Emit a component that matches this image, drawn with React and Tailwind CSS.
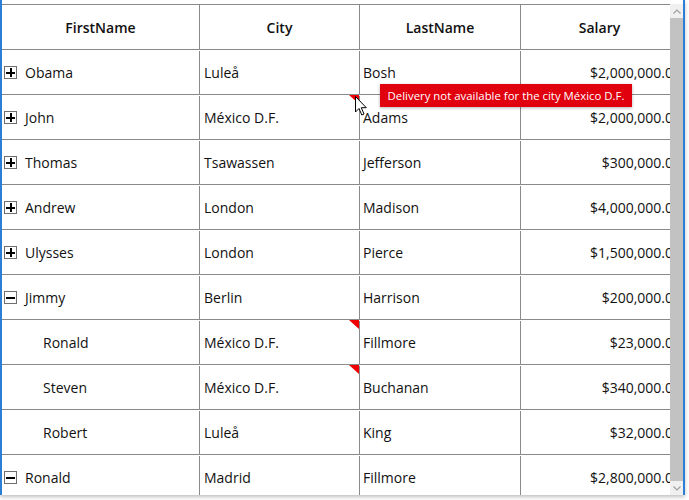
import React from "react";

const rows = [
  { first: "Obama", city: "Luleå", last: "Bosh", salary: "$2,000,000.00", kind: "plus" },
  { first: "John", city: "México D.F.", last: "Adams", salary: "$2,000,000.00", kind: "plus", flag: true },
  { first: "Thomas", city: "Tsawassen", last: "Jefferson", salary: "$300,000.00", kind: "plus" },
  { first: "Andrew", city: "London", last: "Madison", salary: "$4,000,000.00", kind: "plus" },
  { first: "Ulysses", city: "London", last: "Pierce", salary: "$1,500,000.00", kind: "plus" },
  { first: "Jimmy", city: "Berlin", last: "Harrison", salary: "$200,000.00", kind: "minus" },
  { first: "Ronald", city: "México D.F.", last: "Fillmore", salary: "$23,000.00", kind: "child", flag: true },
  { first: "Steven", city: "México D.F.", last: "Buchanan", salary: "$340,000.00", kind: "child", flag: true },
  { first: "Robert", city: "Luleå", last: "King", salary: "$32,000.00", kind: "child" },
  { first: "Ronald", city: "Madrid", last: "Fillmore", salary: "$2,800,000.00", kind: "minus" },
];

const Expander = ({ open }) => (
  <span className="relative w-[13px] h-[13px] border border-[#6f6f6f] shrink-0 bg-white">
    <span className="absolute left-[1px] right-[1px] top-[4.5px] h-[2px] bg-black" />
    {!open && <span className="absolute top-[1px] bottom-[1px] left-[4.5px] w-[2px] bg-black" />}
  </span>
);

const Cursor = () => (
  <svg width="13" height="20" viewBox="0 0 13 20" className="absolute left-[355px] top-[96px]">
    <path d="M0.5 0.5 L0.5 16 L4 12.5 L6.8 19 L9 18 L6.3 11.7 L11.3 11.7 Z" fill="white" stroke="black" strokeWidth="1" strokeLinejoin="miter" />
  </svg>
);

export default function App() {
  return (
    <div className="relative w-[689px] h-[500px] bg-white overflow-hidden text-[#111]" style={{ fontFamily: "'Open Sans', 'Noto Sans', sans-serif" }}>
      <div className="w-[685px] h-[495px] border-x-2 border-[#2a7fd4] pt-[4px] flex shadow-[0_2px_4px_rgba(0,0,0,0.25)] bg-white">
        <div className="w-[668px] overflow-hidden">
          <div className="w-[682px]">
            <div className="flex h-[46px] border-y border-[#8a8a8a] text-[14px] font-semibold">
              <div className="w-[198px] border-r border-[#8a8a8a] flex items-center justify-center">FirstName</div>
              <div className="w-[160px] border-r border-[#8a8a8a] flex items-center justify-center">City</div>
              <div className="w-[161px] border-r border-[#8a8a8a] flex items-center justify-center">LastName</div>
              <div className="flex-1 flex items-center justify-center pr-[6px]">Salary</div>
            </div>
            {rows.map((r, i) => (
              <div key={i} className="flex h-[45px] border-b border-[#8a8a8a] text-[14px] pt-[1px]">
                <div className={`w-[198px] border-r border-[#8a8a8a] flex items-center ${r.kind === "child" ? "pl-[41px]" : "pl-[2px] gap-[8px]"}`}>
                  {r.kind !== "child" && <Expander open={r.kind === "minus"} />}
                  <span>{r.first}</span>
                </div>
                <div className="relative w-[160px] border-r border-[#8a8a8a] flex items-center pl-[4px]">
                  {r.city}
                  {r.flag && (
                    <span className="absolute right-0 top-[-1px] w-0 h-0 border-t-[9px] border-t-[#f00000] border-l-[10px] border-l-transparent" />
                  )}
                </div>
                <div className="w-[161px] border-r border-[#8a8a8a] flex items-center pl-[3px]">{r.last}</div>
                <div className="flex-1 flex items-center justify-end pr-[3px]">{r.salary}</div>
              </div>
            ))}
          </div>
        </div>
        <div className="w-[13px] flex flex-col bg-[#f0f0f0]">
          <div className="h-[14px] flex items-center justify-center">
            <svg width="8" height="5" viewBox="0 0 8 5"><path d="M0.5 4.5 L4 1 L7.5 4.5" fill="none" stroke="#a0a0a0" strokeWidth="1.2" /></svg>
          </div>
          <div className="flex-1 bg-[#c2c2c2]" />
          <div className="h-[14px] flex items-center justify-center">
            <svg width="8" height="5" viewBox="0 0 8 5"><path d="M0.5 0.5 L4 4 L7.5 0.5" fill="none" stroke="#a0a0a0" strokeWidth="1.2" /></svg>
          </div>
        </div>
      </div>

      <div className="absolute left-[380px] top-[84px] w-[252px] h-[23px] bg-[#e0000e] text-white text-[11.4px] flex items-center justify-center shadow-[0_1px_3px_rgba(0,0,0,0.3)]">
        Delivery not available for the city México D.F.
      </div>
      <Cursor />
    </div>
  );
}
